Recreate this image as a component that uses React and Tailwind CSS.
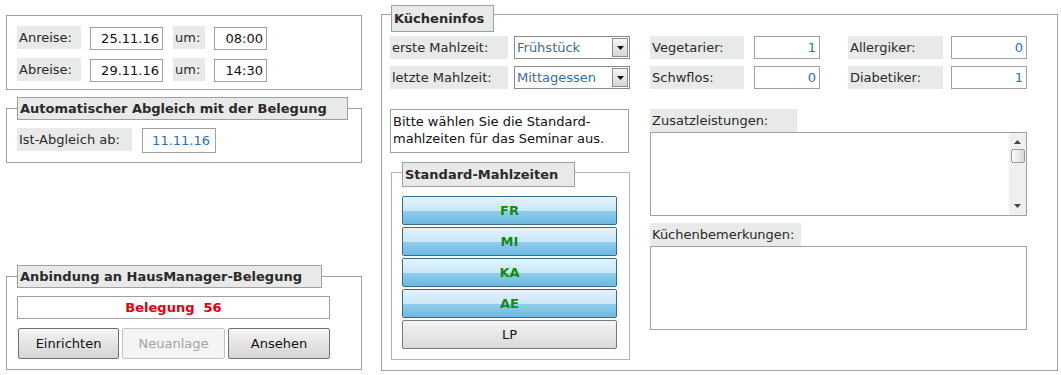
import React from 'react'

const LABEL_BG = 'bg-[#e8e9e9]'

function Label({ className = '', children }) {
  return (
    <div className={`h-[23px] shrink-0 ${LABEL_BG} pl-[2px] leading-[23px] text-[#2a2a2a] ${className}`}>
      {children}
    </div>
  )
}

function Field({ className = '', children }) {
  return (
    <div className={`h-[23px] shrink-0 border border-[#a0a0a0] bg-white pr-[3px] text-right leading-[21px] ${className}`}>
      {children}
    </div>
  )
}

function Legend({ className = '', children }) {
  return (
    <div className={`h-[23px] border border-[#a0a0a0] ${LABEL_BG} pl-[2px] font-bold leading-[21px] text-[#2a2a2a] ${className}`}>
      {children}
    </div>
  )
}

function DateRow({ label, date, time }) {
  return (
    <div className="flex items-start">
      <Label className="w-[64px]">{label}</Label>
      <Field className="ml-[9px] mt-[1px] h-[22px] w-[73px] text-[#111]">{date}</Field>
      <Label className="ml-[10px] w-[32px]">um:</Label>
      <Field className="ml-[9px] mt-[1px] h-[22px] w-[53px] text-[#111]">{time}</Field>
    </div>
  )
}

function Select({ value }) {
  return (
    <div className="ml-[6px] flex h-[23px] w-[116px] items-center border border-[#8a8a8a] bg-white pl-[2px] text-[#2f6fb0]">
      <span className="flex-1 leading-[21px]">{value}</span>
      <div className="mr-[1px] flex h-[19px] w-[16px] items-center justify-center border border-[#8c8c8c] bg-gradient-to-b from-[#f6f6f6] to-[#d6d6d6]">
        <svg width="7" height="4" viewBox="0 0 7 4">
          <path d="M0 0h7L3.5 4z" fill="#111" />
        </svg>
      </div>
    </div>
  )
}

function CountRow({ a, av, b, bv, className = '' }) {
  return (
    <div className={`flex items-start ${className}`}>
      <Label className="w-[94px]">{a}</Label>
      <Field className="ml-[10px] w-[66px] text-[#2f6fb0]">{av}</Field>
      <Label className="ml-[28px] w-[95px]">{b}</Label>
      <Field className="ml-[8px] w-[76px] text-[#2f6fb0]">{bv}</Field>
    </div>
  )
}

function MealButton({ children, active }) {
  if (!active) {
    return (
      <div className="h-[29px] w-[215px] rounded-[2px] border border-[#7a7a7a] bg-gradient-to-b from-[#f4f4f4] to-[#d9d9d9] text-center leading-[27px] text-[#111]">
        {children}
      </div>
    )
  }
  return (
    <div className="relative h-[29px] w-[215px] overflow-hidden rounded-[2px] border border-[#3b6a86] text-center font-bold leading-[27px] text-[#138a13]">
      <div className="flex h-full flex-col">
        <div className="h-1/2 bg-gradient-to-b from-[#e4f3fc] to-[#c8e7f7]" />
        <div className="h-1/2 bg-gradient-to-b from-[#8fcdee] to-[#6cb9e2]" />
      </div>
      <span className="absolute inset-0">{children}</span>
    </div>
  )
}

function Scrollbar() {
  return (
    <div className="flex h-full w-[17px] flex-col items-center bg-[#efefef]">
      <svg className="mt-[7px]" width="7" height="4" viewBox="0 0 7 4">
        <path d="M0 4h7L3.5 0z" fill="#444" />
      </svg>
      <div className="mt-[5px] h-[14px] w-[14px] rounded-[2px] border border-[#9a9a9a] bg-gradient-to-r from-[#fafafa] to-[#d8d8d8]" />
      <div className="flex-1" />
      <svg className="mb-[7px]" width="7" height="4" viewBox="0 0 7 4">
        <path d="M0 0h7L3.5 4z" fill="#444" />
      </svg>
    </div>
  )
}

export default function App() {
  return (
    <div className="flex h-[375px] w-[1061px] bg-white pl-[6px] font-['DejaVu_Sans',sans-serif] text-[13px] text-[#222]">
      {/* linke Spalte */}
      <div className="flex w-[356px] flex-col">
        <div className="mt-[15px] flex h-[75px] flex-col gap-[8px] border border-[#a0a0a0] pl-[10px] pt-[10px]">
          <DateRow label="Anreise:" date="25.11.16" time="08:00" />
          <DateRow label="Abreise:" date="29.11.16" time="14:30" />
        </div>

        <div className="mt-[18px] h-[55px] border border-[#a0a0a0] pl-[10px]">
          <Legend className="-mt-[12px] w-[331px]">Automatischer Abgleich mit der Belegung</Legend>
          <div className="mt-[8px] flex items-start">
            <Label className="w-[115px]">Ist-Abgleich ab:</Label>
            <Field className="ml-[10px] h-[25px] w-[74px] pr-[5px] leading-[23px] text-[#2f6fb0]">11.11.16</Field>
          </div>
        </div>

        <div className="mt-[113px] h-[94px] border border-[#a0a0a0] pl-[10px]">
          <Legend className="-mt-[12px] w-[305px]">Anbindung an HausManager-Belegung</Legend>
          <div className="mt-[8px] h-[23px] w-[313px] border border-[#a0a0a0] bg-white text-center font-bold leading-[21px] text-[#e00010]">
            Belegung&nbsp; 56
          </div>
          <div className="ml-[1px] mt-[9px] flex gap-[3px]">
            <div className="h-[31px] w-[101px] rounded-[2px] border border-[#6f6f6f] bg-gradient-to-b from-[#f5f5f5] to-[#d4d4d4] text-center leading-[29px] text-[#111]">
              Einrichten
            </div>
            <div className="h-[31px] w-[103px] rounded-[2px] border border-[#c4c4c4] bg-[#f4f4f4] text-center leading-[29px] text-[#a3a3a3]">
              Neuanlage
            </div>
            <div className="h-[31px] w-[102px] rounded-[2px] border border-[#6f6f6f] bg-gradient-to-b from-[#f5f5f5] to-[#d4d4d4] text-center leading-[29px] text-[#111]">
              Ansehen
            </div>
          </div>
        </div>
      </div>

      {/* Kücheninfos */}
      <div className="ml-[19px] mt-[14px] h-[357px] w-[677px] border border-[#a0a0a0] pl-[8px]">
        <Legend className="-mt-[10px] ml-[1px] h-[27px] w-[103px] leading-[25px]">Kücheninfos</Legend>
        <div className="mt-[4px] flex">
          <div className="flex w-[240px] flex-col">
            <div className="flex items-start">
              <Label className="w-[118px]">erste Mahlzeit:</Label>
              <Select value="Frühstück" />
            </div>
            <div className="mt-[7px] flex items-start">
              <Label className="w-[118px]">letzte Mahlzeit:</Label>
              <Select value="Mittagessen" />
            </div>
            <div className="mt-[20px] h-[44px] w-[239px] border border-[#a0a0a0] bg-white px-[2px] pt-[3px] leading-[17px] text-[#111]">
              Bitte wählen Sie die Standard-
              <br />
              mahlzeiten für das Seminar aus.
            </div>
            <div className="ml-[1px] mt-[19px] h-[188px] w-[239px] border border-[#b4b4b4] pl-[10px]">
              <Legend className="-mt-[11px] h-[25px] w-[173px] leading-[23px]">Standard-Mahlzeiten</Legend>
              <div className="mt-[9px] flex flex-col gap-[2px]">
                <MealButton active>FR</MealButton>
                <MealButton active>MI</MealButton>
                <MealButton active>KA</MealButton>
                <MealButton active>AE</MealButton>
                <MealButton>LP</MealButton>
              </div>
            </div>
          </div>

          <div className="ml-[20px] flex w-[377px] flex-col">
            <CountRow a="Vegetarier:" av="1" b="Allergiker:" bv="0" />
            <CountRow className="mt-[7px]" a="Schwflos:" av="0" b="Diabetiker:" bv="1" />

            <Label className="mt-[20px] h-[21px] w-[147px] leading-[21px]">Zusatzleistungen:</Label>
            <div className="flex h-[84px] w-[377px] border border-[#a0a0a0] bg-white">
              <div className="flex-1" />
              <Scrollbar />
            </div>

            <Label className="mt-[7px] h-[22px] w-[151px] leading-[22px]">Küchenbemerkungen:</Label>
            <div className="h-[84px] w-[377px] border border-[#a0a0a0] bg-white" />
          </div>
        </div>
      </div>
    </div>
  )
}
